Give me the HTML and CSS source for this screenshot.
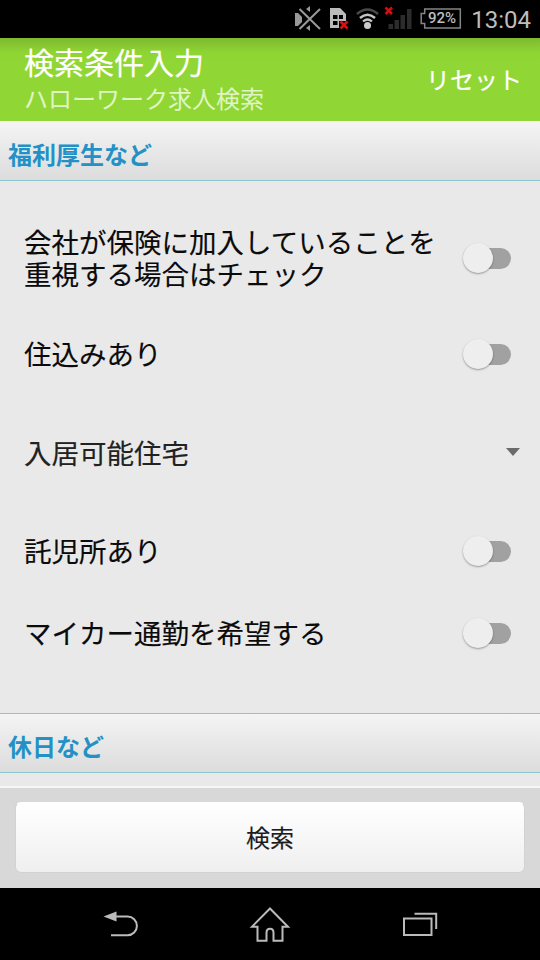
FILE: index.html
```html
<!DOCTYPE html>
<html lang="ja">
<head>
<meta charset="utf-8">
<title>検索条件入力</title>
<link rel="stylesheet" href="styles.css">
</head>
<body>
<div class="screen">
  <div class="status">
    <svg class="status-icons" viewBox="0 0 180 37" width="180" height="37" aria-hidden="true">
      <path d="M5 13h3l4 4v5l-4 4h-3z" fill="#999"/>
      <path d="M20 6v6l-4-3zM20 31v-6l-4 3z" fill="#999"/>
      <path d="M9.500 9l20.500 20M30 9l-20.500 20" stroke="#999" stroke-width="2"/>
      <path d="M40 8h10l6 6v14h-16z" fill="#bbb"/>
      <path d="M43 15h4.500v4h-4.500zM49 15h4v4h-4zM43 21h4.500v4h-4.500zM49 21h7v7h-7z" fill="#000"/>
      <path d="M50.500 21.500l7 7M57.500 21.500l-7 7" stroke="#d01414" stroke-width="2.800"/>
      <g fill="none">
        <path d="M67 14q10.500-9 21 0" stroke="#4a4a4a" stroke-width="2.500"/>
        <path d="M70 18q7.500-6.500 15 0" stroke="#c4c4c4" stroke-width="2.500"/>
        <path d="M73 21.500q4.500-4 9 0" stroke="#c4c4c4" stroke-width="2.300"/>
      </g>
      <circle cx="77.500" cy="25.500" r="3.500" fill="#ccc"/>
      <path d="M98.500 24h4.500v5h-4.500zM104.500 20h4.500v9h-4.500zM110.500 15h4.500v14h-4.500zM117 9h4.500v20h-4.500z" fill="#2c2c2c"/>
      <path d="M95.500 7.500l6.500 6.500M102 7.500l-6.500 6.500" stroke="#d80c0c" stroke-width="2.600"/>
      <path d="M134.700 9h35.600v19h-35.600v-4.500h-3.500v-10h3.500z" fill="none" stroke="#858585" stroke-width="1.500"/>
    </svg>
    <span class="battery">92%</span>
    <span class="clock">13:04</span>
  </div>
  <header class="header">
    <div>
      <h1 class="title">検索条件入力</h1>
      <p class="subtitle">ハローワーク求人検索</p>
    </div>
    <span class="reset">リセット</span>
  </header>
  <main class="content">
    <h2 class="section first">福利厚生など</h2>
    <div class="rows">
      <div class="row"><span>会社が保険に加入していることを<br>重視する場合はチェック</span><i class="toggle"></i></div>
      <div class="row"><span>住込みあり</span><i class="toggle"></i></div>
      <div class="row select"><span>入居可能住宅</span><i class="caret"></i></div>
      <div class="row childcare"><span>託児所あり</span><i class="toggle"></i></div>
      <div class="row commute"><span>マイカー通勤を希望する</span><i class="toggle"></i></div>
    </div>
    <h2 class="section">休日など</h2>
  </main>
  <footer class="footer"><button class="search">検索</button></footer>
  <nav class="nav">
    <svg viewBox="0 0 540 72" width="540" height="72" fill="none" stroke="#bbb" stroke-width="2" aria-hidden="true">
      <path d="M115 28.500h12.500a9.400 9.400 0 0 1 0 18.800H111"/>
      <path d="M103.500 28.500l13-5v10z" fill="#bbb" stroke="none"/>
      <path d="M270 20.500l18 18.200h-5.500v14h-9v-8q0-4-3.500-4t-3.500 4v8h-9v-14h-5.500z"/>
      <path d="M404 30.500h27.500v16.500H404zM414.500 25.700H436.200V41"/>
    </svg>
  </nav>
</div>
</body>
</html>
```
FILE: styles.css
```css
* { box-sizing: border-box; }
body {
  margin: 0;
  font-family: "Noto Sans CJK JP", sans-serif;
  color: #0b0b0b;
}
h1, h2, p { margin: 0; font-weight: 400; }
.screen {
  width: 540px;
  height: 960px;
  display: flex;
  flex-direction: column;
  overflow: hidden;
  background: #e9e9e9;
}
.status {
  position: relative;
  flex: 0 0 38px;
  height: 38px;
  display: flex;
  align-items: flex-start;
  justify-content: flex-end;
  padding-right: 9px;
  background: #000;
  font-family: Roboto, sans-serif;
  color: #bdbdbd;
}
.status-icons { position: absolute; left: 290px; top: 0; overflow: visible; }
.battery {
  position: absolute;
  left: 428px;
  top: 9px;
  font-size: 15px;
  line-height: 19px;
  font-weight: 500;
}
.clock { font-size: 24px; line-height: 40px; }
.header {
  flex: 0 0 83px;
  display: flex;
  justify-content: space-between;
  align-items: center;
  padding: 0 18px 2px 24px;
  color: #fff;
  background: linear-gradient(#7fb92f, #8ed433 14px, #90d735 24px);
}
.title { font-size: 30px; line-height: 38px; -webkit-text-stroke: .2px; }
.subtitle { font-size: 24px; line-height: 35px; color: #e0f4c5; }
.reset { font-size: 24px; line-height: 36px; -webkit-text-stroke: .2px; }
.content { flex: 0 0 665px; border-top: 1px solid #f6f6f6; }
.section {
  height: 60px;
  padding-left: 8px;
  border: solid #8fc5d3;
  border-width: 1px 0;
  background: linear-gradient(#f4f4f4, #dcdcdc);
  color: #2491c6;
  font-size: 24px;
  line-height: 64px;
  font-weight: 700;
}
.section.first { height: 59px; border-top: 0; }
.rows { height: 532px; padding: 29px 19px 0 24px; }
.row {
  height: 96px;
  display: flex;
  align-items: center;
  justify-content: space-between;
  font-size: 27.5px;
  line-height: 32px;
  white-space: nowrap;
  -webkit-text-stroke: .15px;
}
.row span { margin-bottom: 3px; }
.select { height: 102px; color: #222; }
.childcare { height: 94px; }
.commute { height: 70px; }
.toggle {
  width: 48px;
  height: 30px;
  margin-right: 10px;
  display: flex;
  align-items: center;
}
.toggle::before {
  content: "";
  flex: none;
  width: 30px;
  height: 30px;
  border-radius: 50%;
  background: #eee;
  box-shadow: 0 1px 2px rgba(0, 0, 0, .35);
  z-index: 1;
}
.toggle::after {
  content: "";
  flex: none;
  width: 33px;
  height: 21px;
  margin-left: -15px;
  border-radius: 0 11px 11px 0;
  background: #a1a1a1;
}
.caret {
  border: solid transparent;
  border-width: 8px 7.5px 0;
  border-top-color: #6b6b6b;
  margin: 0 1px 3px 0;
}
.footer {
  flex: 0 0 102px;
  padding: 14px 15px;
  border-top: 2px solid #f7f7f7;
  background: #d8d8d8;
}
.search {
  display: block;
  width: 510px;
  height: 71px;
  padding: 0 0 2px;
  border: 1px solid #d2d2d2;
  border-top-color: #fff;
  border-radius: 6px;
  background: linear-gradient(#fff, #efefef);
  font: 24px/67px "Noto Sans CJK JP", sans-serif;
  color: #1c1c1c;
  -webkit-text-stroke: .15px;
}
.nav { flex: 0 0 72px; background: #000; }
.nav svg { display: block; }
```
